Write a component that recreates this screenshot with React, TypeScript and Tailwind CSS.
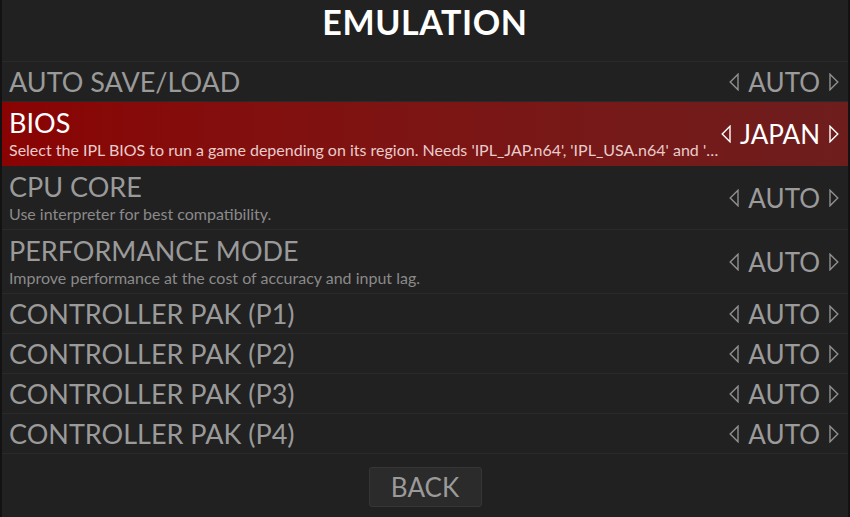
import React from "react";

const font = { fontFamily: "Lato, 'Open Sans', sans-serif" };

function TriLeft({ color }: { color: string }) {
  return (
    <svg width="10" height="18" viewBox="0 0 10 18" className="shrink-0">
      <polygon points="9,1.2 1.2,9 9,16.8" fill="none" stroke={color} strokeWidth="1.4" strokeLinejoin="miter" />
    </svg>
  );
}
function TriRight({ color }: { color: string }) {
  return (
    <svg width="10" height="18" viewBox="0 0 10 18" className="shrink-0">
      <polygon points="1,1.2 8.8,9 1,16.8" fill="none" stroke={color} strokeWidth="1.4" strokeLinejoin="miter" />
    </svg>
  );
}

type Row = { label: string; desc?: string; value: string; selected?: boolean };

const rows: Row[] = [
  { label: "AUTO SAVE/LOAD", value: "AUTO" },
  {
    label: "BIOS",
    desc: "Select the IPL BIOS to run a game depending on its region. Needs 'IPL_JAP.n64', 'IPL_USA.n64' and 'IPL_EUR.n64' in the bios folder.",
    value: "JAPAN",
    selected: true,
  },
  { label: "CPU CORE", desc: "Use interpreter for best compatibility.", value: "AUTO" },
  { label: "PERFORMANCE MODE", desc: "Improve performance at the cost of accuracy and input lag.", value: "AUTO" },
  { label: "CONTROLLER PAK (P1)", value: "AUTO" },
  { label: "CONTROLLER PAK (P2)", value: "AUTO" },
  { label: "CONTROLLER PAK (P3)", value: "AUTO" },
  { label: "CONTROLLER PAK (P4)", value: "AUTO" },
];

export default function App() {
  return (
    <div
      className="w-[850px] h-[517px] bg-[#212121] border-x-2 border-[#121212] flex flex-col overflow-hidden"
      style={font}
    >
      <div className="h-[62px] flex items-start justify-center pt-[1px] border-b border-[#2a2a2a]">
        <div className="text-[34px] font-bold text-white tracking-[0.6px] leading-[42px]">EMULATION</div>
      </div>
      <div className="flex flex-col">
        {rows.map((r) => {
          const sel = !!r.selected;
          const arrowColor = sel ? "#ffffff" : "#8f8f8f";
          return (
            <div
              key={r.label}
              className={
                (r.desc ? "h-[64px] " : "h-[40px] ") +
                "flex items-center pl-[7px] pr-[9px] " +
                (sel
                  ? "bg-gradient-to-r from-[#8a0303] to-[#6e1d1d]"
                  : "border-b border-[#2a2a2a]")
              }
            >
              <div className="flex-1 min-w-0 flex flex-col">
                <div
                  className={
                    "text-[27px] leading-[32px] truncate " + (sel ? "text-white" : "text-[#9a9a9a]")
                  }
                >
                  {r.label}
                </div>
                {r.desc && (
                  <div
                    className={
                      "text-[16px] leading-[22px] truncate " + (sel ? "text-[#e8cccc]" : "text-[#8a8a8a]")
                    }
                  >
                    {r.desc}
                  </div>
                )}
              </div>
              <div className="flex items-center gap-[9px] pl-[2px]">
                <TriLeft color={arrowColor} />
                <span className={"text-[26px] leading-[32px] " + (sel ? "text-white" : "text-[#9b9b9b]")}>
                  {r.value}
                </span>
                <TriRight color={arrowColor} />
              </div>
            </div>
          );
        })}
      </div>
      <div className="flex justify-center pt-[13px]">
        <div className="w-[113px] h-[40px] rounded-[3px] bg-[#2b2b2b] border border-[#363636] flex items-center justify-center text-[26px] text-[#9a9a9a]">
          BACK
        </div>
      </div>
    </div>
  );
}
